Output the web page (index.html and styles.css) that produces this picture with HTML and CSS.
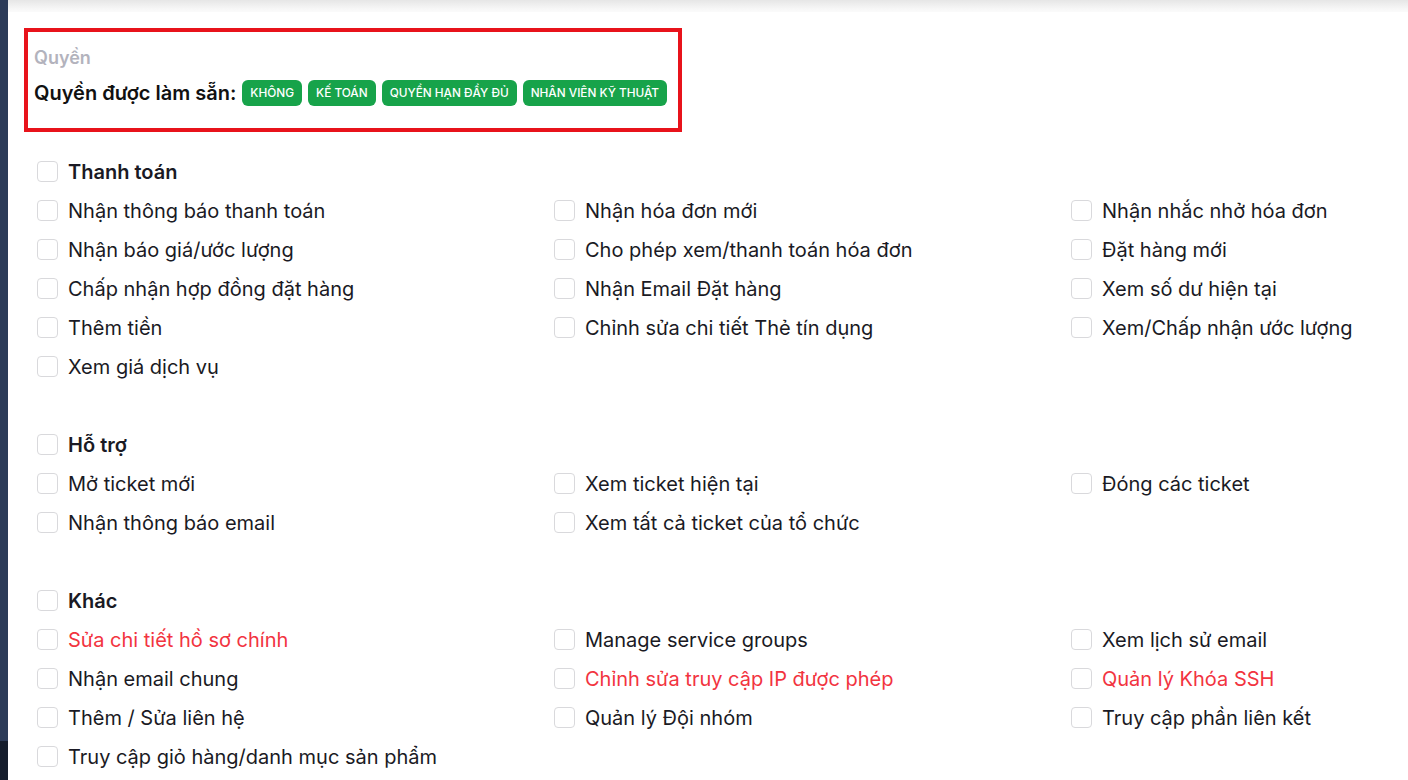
FILE: index.html
```html
<!DOCTYPE html>
<html>
<head>
    <title>Quyền</title>
    <link rel="stylesheet" href="styles.css">
</head>
<body>
    <div class="sidebar">
        <div class="sidebar-top"></div>
        <div class="sidebar-bottom"></div>
    </div>
    <div class="main">
        <div class="topbar"></div>

        <div class="presets">
            <div class="presets-title">Quyền</div>
            <div class="presets-row">
                <span class="presets-label">Quyền được làm sẵn:</span>
                <span class="badge">KHÔNG</span>
                <span class="badge">KẾ TOÁN</span>
                <span class="badge">QUYỀN HẠN ĐẦY ĐỦ</span>
                <span class="badge">NHÂN VIÊN KỸ THUẬT</span>
            </div>
        </div>

        <div class="section">
            <label class="check head"><span class="box"></span>Thanh toán</label>
            <div class="grid">
                <label class="check"><span class="box"></span>Nhận thông báo thanh toán</label>
                <label class="check"><span class="box"></span>Nhận hóa đơn mới</label>
                <label class="check"><span class="box"></span>Nhận nhắc nhở hóa đơn</label>
                <label class="check"><span class="box"></span>Nhận báo giá/ước lượng</label>
                <label class="check"><span class="box"></span>Cho phép xem/thanh toán hóa đơn</label>
                <label class="check"><span class="box"></span>Đặt hàng mới</label>
                <label class="check"><span class="box"></span>Chấp nhận hợp đồng đặt hàng</label>
                <label class="check"><span class="box"></span>Nhận Email Đặt hàng</label>
                <label class="check"><span class="box"></span>Xem số dư hiện tại</label>
                <label class="check"><span class="box"></span>Thêm tiền</label>
                <label class="check"><span class="box"></span>Chỉnh sửa chi tiết Thẻ tín dụng</label>
                <label class="check"><span class="box"></span>Xem/Chấp nhận ước lượng</label>
                <label class="check"><span class="box"></span>Xem giá dịch vụ</label>
            </div>
        </div>

        <div class="section">
            <label class="check head"><span class="box"></span>Hỗ trợ</label>
            <div class="grid">
                <label class="check"><span class="box"></span>Mở ticket mới</label>
                <label class="check"><span class="box"></span>Xem ticket hiện tại</label>
                <label class="check"><span class="box"></span>Đóng các ticket</label>
                <label class="check"><span class="box"></span>Nhận thông báo email</label>
                <label class="check"><span class="box"></span>Xem tất cả ticket của tổ chức</label>
            </div>
        </div>

        <div class="section">
            <label class="check head"><span class="box"></span>Khác</label>
            <div class="grid">
                <label class="check danger"><span class="box"></span>Sửa chi tiết hồ sơ chính</label>
                <label class="check"><span class="box"></span>Manage service groups</label>
                <label class="check"><span class="box"></span>Xem lịch sử email</label>
                <label class="check"><span class="box"></span>Nhận email chung</label>
                <label class="check danger"><span class="box"></span>Chỉnh sửa truy cập IP được phép</label>
                <label class="check danger"><span class="box"></span>Quản lý Khóa SSH</label>
                <label class="check"><span class="box"></span>Thêm / Sửa liên hệ</label>
                <label class="check"><span class="box"></span>Quản lý Đội nhóm</label>
                <label class="check"><span class="box"></span>Truy cập phần liên kết</label>
                <label class="check"><span class="box"></span>Truy cập giỏ hàng/danh mục sản phẩm</label>
            </div>
        </div>
    </div>
</body>
</html>
```

FILE: styles.css
```css
body {
    margin: 0;
    font-family: Inter, 'Noto Sans', sans-serif;
    color: #1a1a24;
    background-color: #ffffff;
    display: flex;
    height: 780px;
    overflow: hidden;
}

.sidebar {
    width: 8px;
    display: flex;
    flex-direction: column;
    flex-shrink: 0;
}

.sidebar-top {
    height: 741px;
    background-color: #2c3b58;
}

.sidebar-bottom {
    flex: 1;
    background-color: #151d2c;
}

.main {
    flex: 1;
    padding: 0 0 0 16px;
}

.topbar {
    height: 12px;
    margin-left: -16px;
    background: linear-gradient(#e6e6e6, #f6f6f6 70%, #fbfbfb);
    margin-bottom: 16px;
}

.presets {
    width: 638px;
    height: 82px;
    border: 4px solid #e8131b;
    padding: 14px 6px 0;
    margin-bottom: 20px;
}

.presets-title {
    font-size: 18px;
    color: #b3b3bd;
    font-weight: 600;
    line-height: 24px;
    margin-bottom: 10px;
}

.presets-row {
    display: flex;
    align-items: center;
    gap: 6px;
}

.presets-label {
    font-size: 20px;
    font-weight: 600;
    color: #111;
}

.badge {
    background-color: #17a34a;
    color: white;
    font-size: 11.8px;
    font-weight: 500;
    height: 26px;
    line-height: 26px;
    padding: 0 8px;
    border-radius: 6px;
}

.section {
    padding-left: 13px;
    margin-bottom: 39px;
}

.grid {
    display: grid;
    grid-template-columns: 517px 517px 1fr;
}

.check {
    display: flex;
    align-items: center;
    height: 39px;
    font-size: 20px;
    color: #1a1a24;
}

.check.head {
    font-weight: 600;
}

.check.danger {
    color: #f2343f;
}

.box {
    box-sizing: border-box;
    width: 21px;
    height: 21px;
    border: 1px solid #d9d9dc;
    border-radius: 4px;
    background-color: #fff;
    margin-right: 10px;
    flex-shrink: 0;
}
```
